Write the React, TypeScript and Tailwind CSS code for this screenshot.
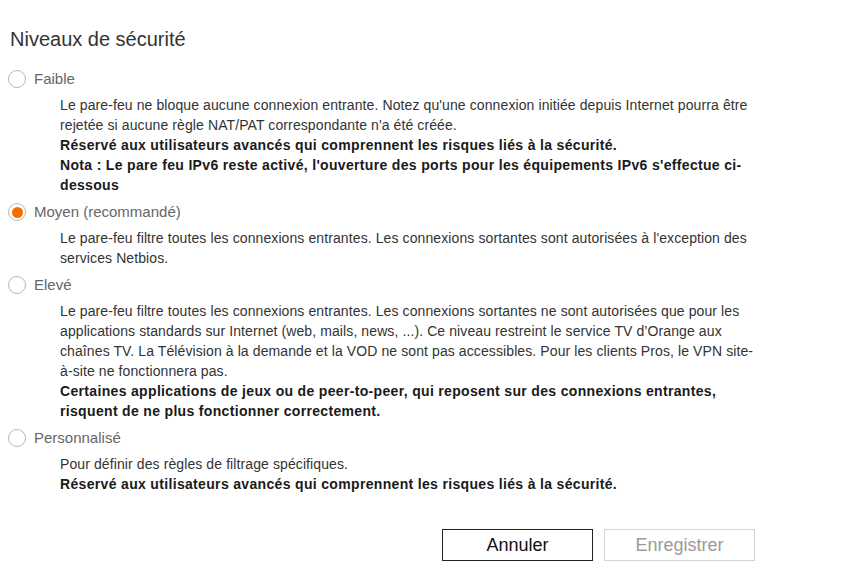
import { useState } from "react";

type Level = {
  id: string;
  label: string;
  body: { text: string; bold?: boolean }[];
};

const levels: Level[] = [
  {
    id: "faible",
    label: "Faible",
    body: [
      {
        text: "Le pare-feu ne bloque aucune connexion entrante. Notez qu'une connexion initiée depuis Internet pourra être rejetée si aucune règle NAT/PAT correspondante n'a été créée.",
      },
      { text: "Réservé aux utilisateurs avancés qui comprennent les risques liés à la sécurité.", bold: true },
      {
        text: "Nota : Le pare feu IPv6 reste activé, l'ouverture des ports pour les équipements IPv6 s'effectue ci-dessous",
        bold: true,
      },
    ],
  },
  {
    id: "moyen",
    label: "Moyen (recommandé)",
    body: [
      {
        text: "Le pare-feu filtre toutes les connexions entrantes. Les connexions sortantes sont autorisées à l'exception des services Netbios.",
      },
    ],
  },
  {
    id: "eleve",
    label: "Elevé",
    body: [
      {
        text: "Le pare-feu filtre toutes les connexions entrantes. Les connexions sortantes ne sont autorisées que pour les applications standards sur Internet (web, mails, news, ...). Ce niveau restreint le service TV d’Orange aux chaînes TV. La Télévision à la demande et la VOD ne sont pas accessibles. Pour les clients Pros, le VPN site-à-site ne fonctionnera pas.",
      },
      {
        text: "Certaines applications de jeux ou de peer-to-peer, qui reposent sur des connexions entrantes, risquent de ne plus fonctionner correctement.",
        bold: true,
      },
    ],
  },
  {
    id: "perso",
    label: "Personnalisé",
    body: [
      { text: "Pour définir des règles de filtrage spécifiques." },
      { text: "Réservé aux utilisateurs avancés qui comprennent les risques liés à la sécurité.", bold: true },
    ],
  },
];

function Radio({ checked }: { checked: boolean }) {
  return (
    <span className="flex h-[18px] w-[18px] shrink-0 items-center justify-center rounded-full border border-[#b8b8b8] bg-white">
      {checked && <span className="h-[11px] w-[11px] rounded-full bg-[#f16e00]" />}
    </span>
  );
}

export default function App() {
  const [level, setLevel] = useState("moyen");

  return (
    <div className="min-h-[572px] w-[854px] bg-white pl-2 pt-[27px] font-['Liberation_Sans',Arial,sans-serif] text-[#333]">
      <h2 className="ml-[2px] text-[20px] leading-[24px] text-[#333]">Niveaux de sécurité</h2>

      <div className="mt-[18px]">
        {levels.map((l) => (
          <div key={l.id} className="mt-[7px] first:mt-0">
            <label
              className="flex h-[20px] cursor-pointer items-center gap-2"
              onClick={() => setLevel(l.id)}
            >
              <Radio checked={level === l.id} />
              <span className="text-[15px] leading-[20px] text-[#666]">{l.label}</span>
            </label>
            <div className="ml-[52px] mt-[6px] w-[694px] text-[14px] leading-[20px]">
              {l.body.map((b, i) => (
                <p
                  key={i}
                  className={
                    b.bold
                      ? "font-bold tracking-[0.33px] text-[#1a1a1a]"
                      : "tracking-[0.1px] text-[#333]"
                  }
                >
                  {b.text}
                </p>
              ))}
            </div>
          </div>
        ))}
      </div>

      <div className="mt-[35px] flex w-[747px] justify-end gap-[11px]">
        <button className="h-[32px] w-[151px] border border-[#222] bg-white text-[18px] text-[#111]">
          Annuler
        </button>
        <button
          disabled
          className="h-[32px] w-[151px] border border-[#d4d4d4] bg-white text-[18px] text-[#9a9a9a]"
        >
          Enregistrer
        </button>
      </div>
    </div>
  );
}
